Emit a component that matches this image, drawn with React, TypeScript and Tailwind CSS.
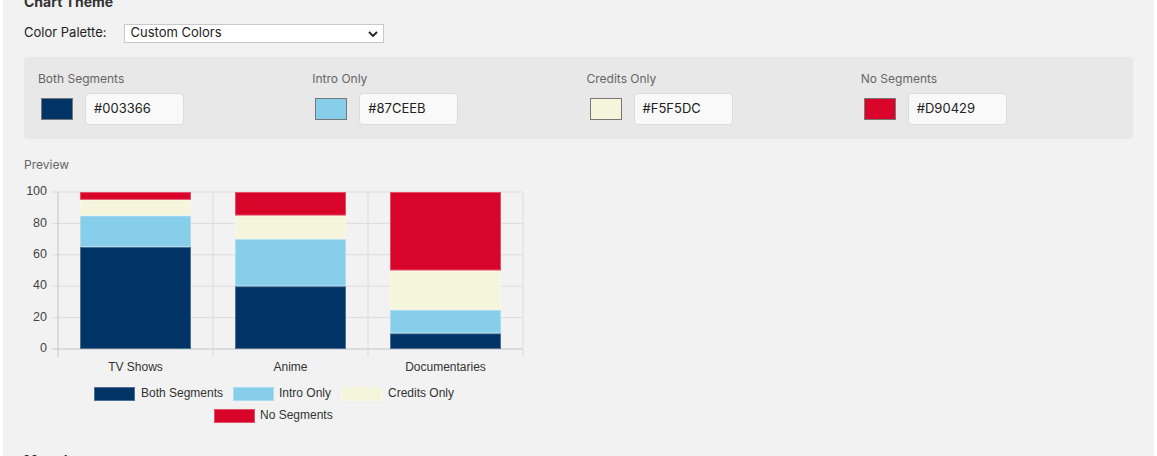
import React from 'react';

const SERIES = [
    { name: 'Both Segments', color: '#003366', edge: '#4d7094' },
    { name: 'Intro Only', color: '#87CEEB', edge: '#abdcf1' },
    { name: 'Credits Only', color: '#F5F5DC', edge: '#f8f8e7' },
    { name: 'No Segments', color: '#D90429', edge: '#e44f69' },
];

const CATEGORIES = [
    { label: 'TV Shows', values: [65, 20, 10, 5] },
    { label: 'Anime', values: [40, 30, 15, 15] },
    { label: 'Documentaries', values: [10, 15, 25, 50] },
];

// chart geometry (svg units)
const LEFT = 34;
const RIGHT = 499;
const TOP = 15;
const BOTTOM = 172;
const CAT_W = (RIGHT - LEFT) / CATEGORIES.length;
const BAR_W = 111;
const yOf = (v: number) => BOTTOM - ((BOTTOM - TOP) * v) / 100;

function PreviewChart() {
    const ticks = [0, 20, 40, 60, 80, 100];

    return (
        <svg width={530} height={250} className="block" style={{ fontFamily: '"Liberation Sans", Arial, sans-serif' }}>
            {ticks.map((t) => (
                <g key={t}>
                    <line x1={28} x2={RIGHT} y1={yOf(t)} y2={yOf(t)} stroke={t === 0 ? '#c4c4c4' : '#dcdcdc'} strokeWidth={1} />
                    <text x={23} y={yOf(t)} textAnchor="end" dominantBaseline="middle" fontSize={12.5} fill="#444">
                        {t}
                    </text>
                </g>
            ))}
            {[0, 1, 2, 3].map((i) => (
                <line
                    key={i}
                    x1={LEFT + CAT_W * i}
                    x2={LEFT + CAT_W * i}
                    y1={TOP}
                    y2={180}
                    stroke={i === 0 ? '#c4c4c4' : '#dcdcdc'}
                    strokeWidth={1}
                />
            ))}

            {CATEGORIES.map((cat, ci) => {
                const x = LEFT + CAT_W * ci + (CAT_W - BAR_W) / 2;
                let acc = 0;
                return (
                    <g key={cat.label}>
                        {cat.values.map((v, si) => {
                            const y1 = yOf(acc + v);
                            const y0 = yOf(acc);
                            acc += v;
                            return (
                                <rect
                                    key={si}
                                    x={x + 0.5}
                                    y={y1 + 0.5}
                                    width={BAR_W - 1}
                                    height={y0 - y1 - 1}
                                    fill={SERIES[si].color}
                                    stroke={SERIES[si].edge}
                                    strokeWidth={1}
                                />
                            );
                        })}
                        <text
                            x={LEFT + CAT_W * ci + CAT_W / 2}
                            y={191}
                            textAnchor="middle"
                            dominantBaseline="middle"
                            fontSize={12}
                            fill="#333"
                        >
                            {cat.label}
                        </text>
                    </g>
                );
            })}

            {[
                { s: 0, bx: 70, tx: 117, y: 217 },
                { s: 1, bx: 209, tx: 255, y: 217 },
                { s: 2, bx: 317, tx: 364, y: 217 },
                { s: 3, bx: 190, tx: 236, y: 239 },
            ].map((l) => (
                <g key={l.s}>
                    <rect
                        x={l.bx + 0.5}
                        y={l.y - 6.5}
                        width={40}
                        height={13}
                        fill={SERIES[l.s].color}
                        stroke={SERIES[l.s].edge}
                        strokeWidth={1}
                    />
                    <text x={l.tx} y={l.y} dominantBaseline="middle" fontSize={12} fill="#333">
                        {SERIES[l.s].name}
                    </text>
                </g>
            ))}
        </svg>
    );
}

export default function App() {
    return (
        <div className="min-h-screen bg-white" style={{ fontFamily: 'Inter, "Noto Sans", sans-serif' }}>
            <div className="mx-[3px] h-[456px] overflow-hidden bg-[#f2f2f2] px-[21px]">
                <h3 className="-mt-[8px] h-5 text-[14px] font-bold leading-5 text-[#333]">Chart Theme</h3>

                <div className="mt-3 flex h-[18px] items-center gap-[17px]">
                    <span className="text-[13px] text-[#222]">Color Palette:</span>
                    <div className="relative flex h-[19px] w-[260px] items-center border border-[#c8c8c8] bg-white pl-[6px] text-[13px] text-[#222]">
                        Custom Colors
                        <svg
                            viewBox="0 0 10 6"
                            className="absolute right-[5px] top-[6px] h-[6px] w-[10px]"
                            fill="none"
                            stroke="#222"
                            strokeWidth={1.8}
                        >
                            <path d="M1 1l4 4 4-4" />
                        </svg>
                    </div>
                </div>

                <div className="mt-[15px] grid grid-cols-4 gap-4 rounded-[4px] bg-[#e8e8e8] p-[14px]">
                    {SERIES.map((s) => (
                        <div key={s.name}>
                            <div className="text-[12px] leading-4 text-[#666]">{s.name}</div>
                            <div className="mt-[6px] flex items-center gap-3">
                                <div
                                    className="ml-[3px] h-[22px] w-[32px] border border-[#777]"
                                    style={{ backgroundColor: s.color }}
                                />
                                <div className="flex h-[32px] w-[99px] items-center rounded-[4px] border border-[#dcdcdc] bg-[#f9f9f9] px-[8px] text-[13px] text-[#222]">
                                    {s.color}
                                </div>
                            </div>
                        </div>
                    ))}
                </div>

                <div className="mt-[18px] text-[12px] leading-4 text-[#666]">Preview</div>
                <div className="mt-[4px]">
                    <PreviewChart />
                </div>

                <h3 className="mt-[24px] text-[14px] font-bold leading-5 text-[#333]">Metadata</h3>
            </div>
        </div>
    );
}
